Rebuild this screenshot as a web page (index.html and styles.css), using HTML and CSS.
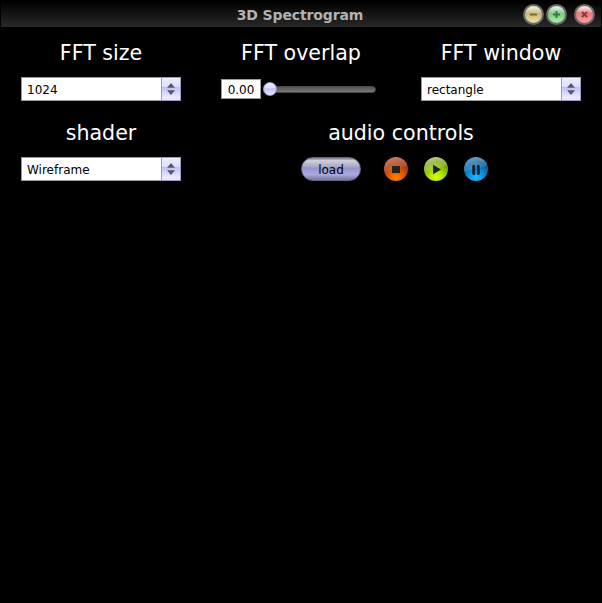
FILE: index.html
```html
<!DOCTYPE html>
<html lang="en">
<head>
<meta charset="utf-8">
<title>3D Spectrogram</title>
<link rel="stylesheet" href="styles.css">
</head>
<body>
<header class="titlebar">
  <h1>3D Spectrogram</h1>
  <div class="window-buttons">
    <button class="win minimize" aria-label="Minimize"><svg viewBox="0 0 21 21"><path d="M7 10.5h7"/></svg></button>
    <button class="win maximize" aria-label="Maximize"><svg viewBox="0 0 21 21"><path d="M7 10.5h7M10.5 7v7"/></svg></button>
    <button class="win close" aria-label="Close"><svg viewBox="0 0 21 21"><path d="M8 8l5 5M13 8l-5 5"/></svg></button>
  </div>
</header>
<main class="controls">
  <section class="control">
    <h2>FFT size</h2>
    <div class="combo"><span>1024</span><i><svg viewBox="0 0 18 22"><path d="M5 9.8L9 5l4 4.8zM5 12.2h8L9 17z"/></svg></i></div>
  </section>
  <section class="control">
    <h2>FFT overlap</h2>
    <div class="slider"><span class="value">0.00</span><div class="track"><div class="thumb"></div></div></div>
  </section>
  <section class="control">
    <h2>FFT window</h2>
    <div class="combo"><span>rectangle</span><i><svg viewBox="0 0 18 22"><path d="M5 9.8L9 5l4 4.8zM5 12.2h8L9 17z"/></svg></i></div>
  </section>
  <section class="control">
    <h2>shader</h2>
    <div class="combo"><span>Wireframe</span><i><svg viewBox="0 0 18 22"><path d="M5 9.8L9 5l4 4.8zM5 12.2h8L9 17z"/></svg></i></div>
  </section>
  <section class="control audio">
    <h2>audio controls</h2>
    <div class="transport">
      <button class="load">load</button>
      <button class="round stop" aria-label="Stop"><svg viewBox="0 0 24 24"><path d="M8 9h8v7H8z"/></svg></button>
      <button class="round play" aria-label="Play"><svg viewBox="0 0 24 24"><path d="M9 7.8v9.4l8-4.7z"/></svg></button>
      <button class="round pause" aria-label="Pause"><svg viewBox="0 0 24 24"><path d="M9.7 9.2v7.2M14.3 9.2v7.2"/></svg></button>
    </div>
  </section>
</main>
</body>
</html>
```
FILE: styles.css
```css
* { box-sizing: border-box; }

body {
  margin: 0;
  height: 603px;
  padding: 1px;
  background: #000;
  color: #fff;
  font-family: "DejaVu Sans", sans-serif;
  overflow: hidden;
}

button { padding: 0; border: 0; font-family: inherit; }
svg { display: block; width: 100%; height: 100%; }

.titlebar {
  display: grid;
  grid-template-columns: 1fr auto 1fr;
  align-items: center;
  height: 26px;
  background: linear-gradient(#000, #282828);
}

h1 {
  grid-column: 2;
  margin: 0;
  padding: 2px 2px 0 0;
  font-size: 14px;
  line-height: 20px;
  letter-spacing: -0.12px;
  color: #b2b2b2;
}

.window-buttons {
  display: flex;
  justify-content: flex-end;
  gap: 2px;
  padding-right: 6px;
}

.win {
  width: 21px;
  height: 21px;
  border: 2px solid #68686b;
  border-radius: 50%;
}
.win svg { margin: -2px; width: 21px; height: 21px; fill: none; stroke-width: 2; }
.minimize { background: linear-gradient(#eee8d3 10%, #cbb878 45%, #e5d596 85%); }
.minimize svg { stroke: #78683f; }
.maximize { background: linear-gradient(#d9eed9 10%, #7fc982 45%, #9ce89e 85%); }
.maximize svg { stroke: #3f7443; }
.close { margin-left: 5px; background: linear-gradient(#f6dcdc 10%, #e87979 45%, #ff9696 85%); }
.close svg { stroke: #833d3d; }

.controls {
  display: grid;
  grid-template-columns: repeat(3, 160px);
  column-gap: 40px;
  padding: 10px 20px;
}

.control { height: 80px; }
.audio { grid-column: 2 / 4; }

h2 {
  margin: 0;
  height: 40px;
  font-size: 20.6px;
  font-weight: 400;
  line-height: 32px;
  text-align: center;
}

.combo {
  display: flex;
  height: 24px;
  border: 1px solid #999;
  background: #fff;
  color: #000;
  font-size: 12px;
  line-height: 24px;
}
.combo span { flex: 1; padding-left: 5px; }
.combo i {
  width: 20px;
  height: 24px;
  margin: -1px;
  border: 1px solid #9d9ac5;
  background: linear-gradient(#eeeeff, #dedeff 40%, #bebeff 42%, #e9e9ff 85%, #e5e5ff);
}
.combo path { fill: #55556a; }

.slider { display: flex; align-items: center; height: 24px; }
.value {
  width: 40px;
  height: 20px;
  border: 1px solid #999;
  background: #fff;
  color: #000;
  font-size: 12px;
  line-height: 20px;
  text-align: center;
}
.track {
  display: flex;
  align-items: center;
  width: 113px;
  height: 7px;
  margin-left: 2px;
  border: 1px solid #4b4b4b;
  border-radius: 4px;
  background: linear-gradient(#555, #777);
}
.thumb {
  flex: none;
  width: 14px;
  height: 14px;
  margin-left: -1px;
  border: 1px solid #9795bd;
  border-radius: 50%;
  background: linear-gradient(#f2f2ff, #d9d9ff 42%, #c1c1ff 48%, #e9e9ff);
}

.transport { display: flex; gap: 16px; padding-left: 80px; }
.load {
  width: 60px;
  height: 24px;
  margin-right: 7px;
  border: 1px solid #696985;
  border-radius: 12px;
  background: linear-gradient(#77778b, #d0d0df 12%, #a5a5c0 42%, #9393cf 45%, #aaaae1 75%, #77779a);
  font-size: 12px;
  line-height: 24px;
  color: #000;
}
.round { width: 24px; height: 24px; border-radius: 50%; }
.round path { fill: #222; }
.stop { background: linear-gradient(165deg, #ffffff66, #ffffff18 48%, transparent 50%), radial-gradient(circle 14px at 50% 85%, #ff8200, #dc5800 55%, #a93b13); }
.play { background: linear-gradient(165deg, #ffffff88, #ffffff28 48%, transparent 50%), radial-gradient(circle 15px at 50% 85%, #ddff00, #a7df00 50%, #729f00); }
.pause { background: linear-gradient(165deg, #ffffff77, #ffffff20 48%, transparent 50%), radial-gradient(circle 15px at 50% 85%, #20b9ff, #0791df 50%, #075c9b); }
.pause path { stroke: #152536; stroke-width: 3; stroke-linecap: round; }
```
